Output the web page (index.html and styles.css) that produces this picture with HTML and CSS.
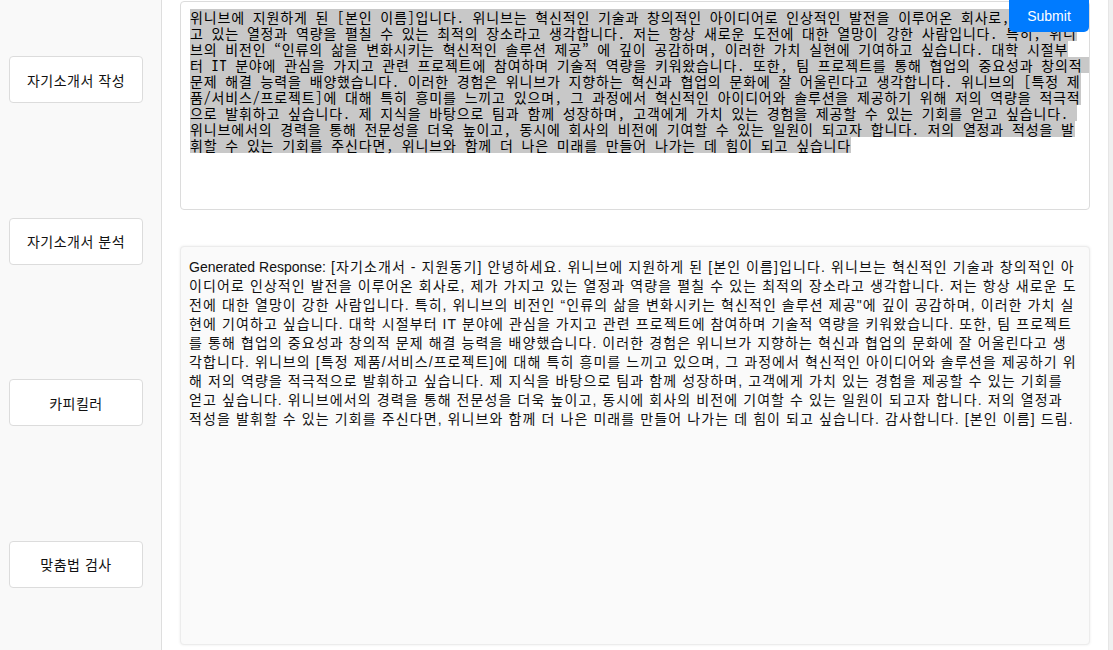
FILE: index.html
```html
<!DOCTYPE html>
<html lang="ko">
<head>
<meta charset="utf-8">
<title>자기소개서</title>
<link rel="stylesheet" href="styles.css">
</head>
<body>
<div class="app">
  <nav class="sidebar">
    <button class="nav-btn">자기소개서 작성</button>
    <button class="nav-btn">자기소개서 분석</button>
    <button class="nav-btn">카피킬러</button>
    <button class="nav-btn">맞춤법 검사</button>
  </nav>
  <main class="main">
    <div class="editor">
      <div class="sel">위니브에 지원하게 된 [본인 이름]입니다. 위니브는 혁신적인 기술과 창의적인 아이디어로 인상적인 발전을 이루어온 회사로, 제가 가지</div>
      <div class="sel">고 있는 열정과 역량을 펼칠 수 있는 최적의 장소라고 생각합니다. 저는 항상 새로운 도전에 대한 열망이 강한 사람입니다. 특히, 위니</div>
      <div class="sel">브의 비전인 “인류의 삶을 변화시키는 혁신적인 솔루션 제공” 에 깊이 공감하며, 이러한 가치 실현에 기여하고 싶습니다. 대학 시절부</div>
      <div class="sel">터 IT 분야에 관심을 가지고 관련 프로젝트에 참여하며 기술적 역량을 키워왔습니다. 또한, 팀 프로젝트를 통해 협업의 중요성과 창의적 </div>
      <div class="sel">문제 해결 능력을 배양했습니다. 이러한 경험은 위니브가 지향하는 혁신과 협업의 문화에 잘 어울린다고 생각합니다. 위니브의 [특정 제</div>
      <div class="sel">품/서비스/프로젝트]에 대해 특히 흥미를 느끼고 있으며, 그 과정에서 혁신적인 아이디어와 솔루션을 제공하기 위해 저의 역량을 적극적</div>
      <div class="sel">으로 발휘하고 싶습니다. 제 지식을 바탕으로 팀과 함께 성장하며, 고객에게 가치 있는 경험을 제공할 수 있는 기회를 얻고 싶습니다. </div>
      <div class="sel">위니브에서의 경력을 통해 전문성을 더욱 높이고, 동시에 회사의 비전에 기여할 수 있는 일원이 되고자 합니다. 저의 열정과 적성을 발</div>
      <div class="sel">휘할 수 있는 기회를 주신다면, 위니브와 함께 더 나은 미래를 만들어 나가는 데 힘이 되고 싶습니다</div>
    </div>
    <button class="submit">Submit</button>
    <div class="response">
      <div class="line"><span class="latin">Generated Response:</span> [자기소개서 - 지원동기] 안녕하세요. 위니브에 지원하게 된 [본인 이름]입니다. 위니브는 혁신적인 기술과 창의적인 아</div>
      <div class="line">이디어로 인상적인 발전을 이루어온 회사로, 제가 가지고 있는 열정과 역량을 펼칠 수 있는 최적의 장소라고 생각합니다. 저는 항상 새로운 도</div>
      <div class="line">전에 대한 열망이 강한 사람입니다. 특히, 위니브의 비전인 “인류의 삶을 변화시키는 혁신적인 솔루션 제공"에 깊이 공감하며, 이러한 가치 실</div>
      <div class="line">현에 기여하고 싶습니다. 대학 시절부터 IT 분야에 관심을 가지고 관련 프로젝트에 참여하며 기술적 역량을 키워왔습니다. 또한, 팀 프로젝트</div>
      <div class="line">를 통해 협업의 중요성과 창의적 문제 해결 능력을 배양했습니다. 이러한 경험은 위니브가 지향하는 혁신과 협업의 문화에 잘 어울린다고 생</div>
      <div class="line">각합니다. 위니브의 [특정 제품/서비스/프로젝트]에 대해 특히 흥미를 느끼고 있으며, 그 과정에서 혁신적인 아이디어와 솔루션을 제공하기 위</div>
      <div class="line">해 저의 역량을 적극적으로 발휘하고 싶습니다. 제 지식을 바탕으로 팀과 함께 성장하며, 고객에게 가치 있는 경험을 제공할 수 있는 기회를</div>
      <div class="line">얻고 싶습니다. 위니브에서의 경력을 통해 전문성을 더욱 높이고, 동시에 회사의 비전에 기여할 수 있는 일원이 되고자 합니다. 저의 열정과</div>
      <div class="line">적성을 발휘할 수 있는 기회를 주신다면, 위니브와 함께 더 나은 미래를 만들어 나가는 데 힘이 되고 싶습니다. 감사합니다. [본인 이름] 드림.</div>
    </div>
  </main>
  <div class="edge"></div>
</div>
</body>
</html>
```
FILE: styles.css
```css
* { box-sizing: border-box; }
html, body { margin: 0; padding: 0; }
body {
  width: 1113px;
  height: 650px;
  overflow: hidden;
  background: #fff;
  font-family: "Liberation Sans", "Noto Sans CJK KR", sans-serif;
  color: #111;
}
.app {
  display: flex;
  height: 650px;
}
.sidebar {
  width: 162px;
  flex: 0 0 162px;
  background: #f9f9f9;
  border-right: 1px solid #dedede;
  display: flex;
  flex-direction: column;
  padding: 56px 0 0 9px;
  gap: 114.5px;
}
.nav-btn {
  width: 134px;
  height: 47px;
  background: #fff;
  border: 1px solid #dcdcdc;
  border-radius: 4px;
  font-family: "Noto Sans CJK KR", sans-serif;
  font-size: 14px;
  letter-spacing: 0.5px;
  color: #111;
  padding: 0;
  cursor: pointer;
}
.main {
  position: relative;
  flex: 0 0 946px;
  width: 946px;
  min-width: 0;
  padding: 1px 18px 0 18px;
  display: flex;
  flex-direction: column;
  gap: 36px;
}
.editor {
  height: 209px;
  border: 1px solid #dcdcdc;
  border-radius: 4px;
  background: #fff;
  padding: 7px 9px;
  font-family: "Noto Sans Mono CJK KR", "Noto Sans CJK KR", monospace;
  font-size: 14px;
  line-height: 16px;
  letter-spacing: 0.85px;
  color: #000;
  overflow: hidden;
}
.sel {
  width: fit-content;
  height: 16px;
  white-space: pre;
  background: #c8c8c8;
}
.submit {
  position: absolute;
  top: 0;
  right: 19px;
  width: 80px;
  height: 32px;
  background: #007bff;
  color: #fff;
  border: none;
  border-radius: 0 0 5px 5px;
  font-family: "Liberation Sans", sans-serif;
  font-size: 14px;
  cursor: pointer;
}
.response {
  height: 399px;
  background: #fafafa;
  border: 1px solid #ececec;
  border-radius: 4px;
  box-shadow: 0 0 3px rgba(0, 0, 0, 0.08);
  padding: 11px 8px;
  font-size: 14px;
  line-height: 19px;
  letter-spacing: 1.1px;
  white-space: nowrap;
  overflow: hidden;
}
.latin {
  letter-spacing: 0;
}
.edge {
  width: 5px;
  flex: 0 0 5px;
  background: #f0f0f0;
  border-left: 1px solid #e6e6e6;
}
```
